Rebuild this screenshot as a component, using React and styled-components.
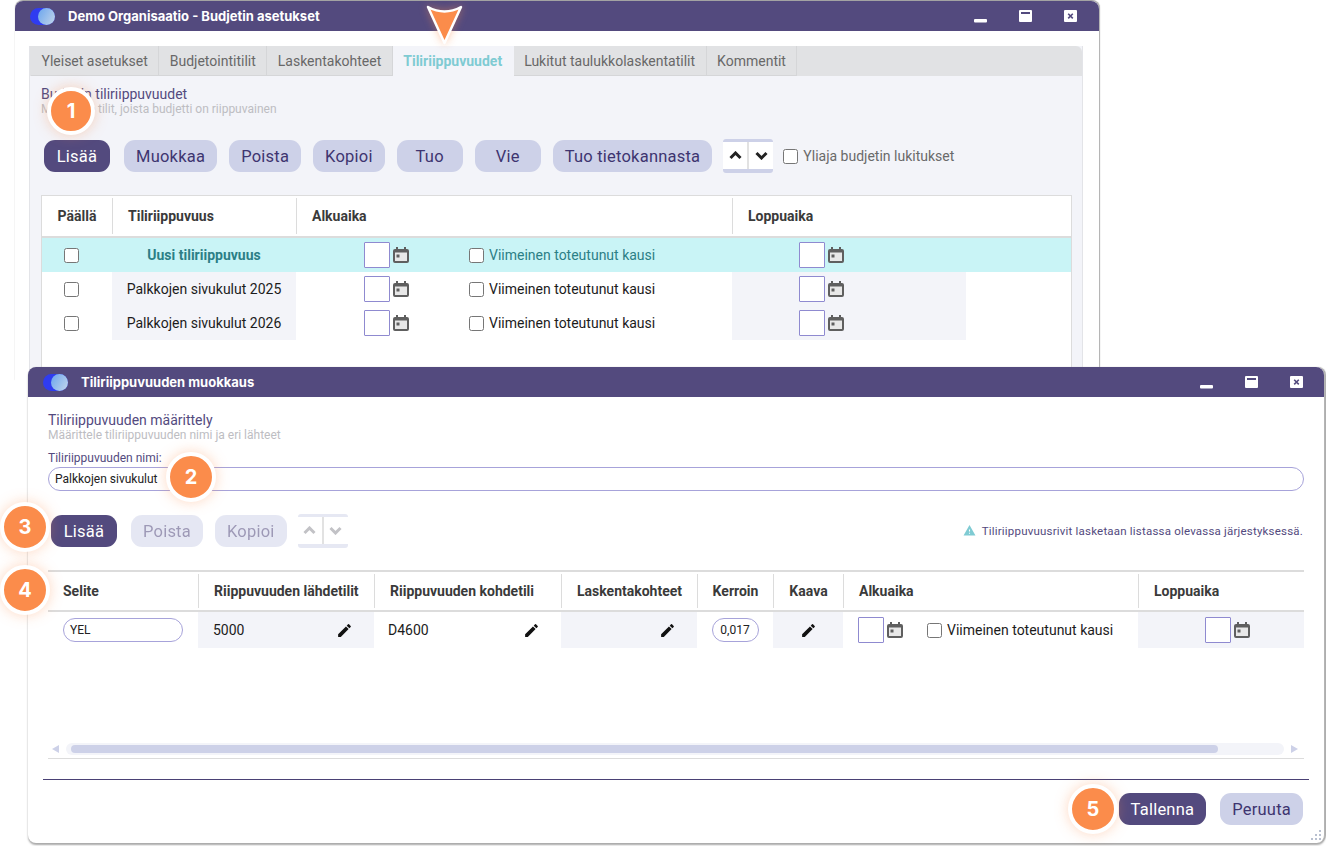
import React from 'react';
import styled, { createGlobalStyle } from 'styled-components';
import { MdEdit, MdWarning } from 'react-icons/md';

const purple = '#534a7e';
const soft = '#cdd1e8';
const panel = '#f3f4f9';
const line = '#dcdcdc';

const Global = createGlobalStyle`
  html, body { margin: 0; padding: 0; background: #fff; }
  body { font-family: Roboto, "Liberation Sans", sans-serif; overflow: hidden; }
  * { box-sizing: border-box; }
`;

const Desktop = styled.div`
  position: relative;
  width: 1326px;
  height: 846px;
  overflow: hidden;
  background: #fff;
`;

const Window = styled.div`
  position: absolute;
  left: ${p => p.$left}px;
  top: ${p => p.$top}px;
  width: ${p => p.$width}px;
  height: ${p => p.$height}px;
  background: #fff;
  border-radius: 8px 8px 0 0;
  border-right: 1px solid #b5b5b5;
  box-shadow: 0 -1px 1px #9a9a9a;
  display: flex;
  flex-direction: column;
  &.front {
    border-radius: 8px;
    box-shadow: 0 2px 2px #a9a9a9, 1px 0 1px #a9a9a9;
  }
`;

const TitleBar = styled.div`
  flex: none;
  height: 30px;
  background: ${purple};
  border-radius: 8px 8px 0 0;
  display: flex;
  align-items: center;
  padding-left: 15px;
  color: #fff;
  font: 700 13px Inter, sans-serif;
`;

const Logo = styled.span`
  position: relative;
  width: 25px;
  height: 17px;
  border-radius: 9px;
  background: #2f3cf0;
  margin-right: 13px;
  &::after {
    content: '';
    position: absolute;
    right: 0;
    top: 0;
    width: 17px;
    height: 17px;
    border-radius: 50%;
    background: linear-gradient(120deg, #6aa5ee, #c4d6ea);
  }
`;

const TitleText = styled.span`
  flex: 1;
`;

const WinButtons = styled.div`
  display: flex;
  align-items: center;
  gap: 32px;
  padding-right: ${p => p.$right}px;
  svg { display: block; }
`;

const Content = styled.div`
  flex: 1;
  min-height: 0;
  display: flex;
  flex-direction: column;
`;

const TabBox = styled.div`
  margin: 15px 16px 0 14px;
  flex: 1;
  background: ${panel};
  border-left: 1px solid #e3e4e8;
  border-right: 1px solid #e3e4e8;
  padding: 0 10px 0 11px;
`;

const Tabs = styled.div`
  display: flex;
  height: 30px;
  margin: 0 -10px 0 -11px;
  padding-left: 1px;
  background: #e1e2e4;
  border-radius: 0 6px 0 0;
`;

const Tab = styled.div`
  padding: 0 10.5px;
  display: flex;
  align-items: center;
  font-size: 14px;
  color: ${p => (p.$active ? '#7fcbd3' : '#686868')};
  font-weight: ${p => (p.$active ? 700 : 400)};
  background: ${p => (p.$active ? panel : 'transparent')};
  border-right: 1px solid ${p => (p.$active ? panel : '#d5d6d8')};
  border-bottom: 1px solid ${p => (p.$active ? panel : '#d5d6d8')};
  white-space: nowrap;
`;

const Heading = styled.div`
  margin-top: ${p => p.$top || 0}px;
  font-size: 14px;
  line-height: 16px;
  color: ${purple};
`;

const SubHeading = styled.div`
  font-size: 12px;
  line-height: 14px;
  color: #bdbdc2;
`;

const Toolbar = styled.div`
  display: flex;
  align-items: center;
  gap: 12px;
  margin: ${p => p.$margin};
`;

const Button = styled.div`
  height: 32px;
  min-width: 66px;
  padding: 0 12px;
  border-radius: 11px;
  display: flex;
  align-items: center;
  justify-content: center;
  font-size: 16.5px;
  letter-spacing: 0.22px;
  white-space: nowrap;
  background: ${p => (p.$primary ? purple : soft)};
  color: ${p => (p.$primary ? '#fff' : '#3e3570')};
  opacity: ${p => (p.$faded ? 0.5 : 1)};
  margin-right: ${p => (p.$primary ? 2 : 0)}px;
`;

const ArrowGroup = styled.div`
  width: 50px;
  height: 34px;
  margin-left: -1px;
  display: flex;
  background: #fff;
  border-top: 3px solid ${p => (p.$faded ? '#e6e8f3' : soft)};
  border-bottom: 4px solid ${p => (p.$faded ? '#e6e8f3' : soft)};
  border-radius: 3px;
`;

const ArrowCell = styled.div`
  flex: 1;
  display: flex;
  align-items: center;
  justify-content: center;
  svg { display: block; }
  & + & { border-left: 2px solid #e2e2e2; }
`;

const Check = styled.span`
  flex: none;
  width: 15px;
  height: 15px;
  border: 1px solid #767676;
  border-radius: 2.5px;
  background: #fff;
  display: inline-block;
`;

const CheckLabel = styled.label`
  display: inline-flex;
  align-items: center;
  gap: 5px;
  margin-left: ${p => p.$left || 0}px;
  font-size: 14px;
  color: ${p => p.$color || '#1c1c1c'};
  white-space: nowrap;
`;

const Table = styled.div`
  background: #fff;
  &.boxed {
    margin-top: 22px;
    border: 1px solid ${line};
    border-bottom: none;
    height: 190px;
  }
  &.flat {
    margin-top: 22px;
    border-top: 2px solid ${line};
  }
`;

const Row = styled.div`
  display: grid;
  grid-template-columns: ${p => p.$cols};
  height: ${p => p.$height}px;
  background: ${p => (p.$selected ? '#c9f4f6' : 'transparent')};
  color: ${p => (p.$selected ? '#2c7f86' : '#1c1c1c')};
`;

const Head = styled.div`
  display: grid;
  grid-template-columns: ${p => p.$cols};
  height: ${p => p.$height}px;
  border-bottom: 2px solid ${line};
  align-items: stretch;
`;

const HeadCell = styled.div`
  display: flex;
  align-items: center;
  justify-content: ${p => (p.$center ? 'center' : 'flex-start')};
  padding-left: ${p => (p.$center ? 0 : 15)}px;
  margin: 2px 0;
  font-size: 14px;
  font-weight: 700;
  color: #3a3a3a;
  white-space: nowrap;
  & + & { border-left: 1px solid ${line}; }
`;

const Cell = styled.div`
  display: flex;
  align-items: center;
  justify-content: ${p => p.$justify || 'flex-start'};
  padding: ${p => p.$pad || '0'};
  gap: ${p => p.$gap || 0}px;
  font-size: 14px;
  font-weight: ${p => (p.$bold ? 700 : 400)};
  background: ${p => (p.$shade ? panel : 'transparent')};
  white-space: nowrap;
  min-width: 0;
`;

const DateBox = styled.span`
  flex: none;
  width: 26px;
  height: 26px;
  background: #fff;
  border: 1px solid #8f8ad0;
  border-radius: 1px;
  display: inline-block;
`;

const DateField = styled.span`
  display: inline-flex;
  align-items: center;
  gap: 3px;
  svg { display: block; }
`;

const Form = styled.div`
  flex: 1;
  display: flex;
  flex-direction: column;
  padding: 15px 20px 0;
  position: relative;
`;

const FieldLabel = styled.div`
  margin-top: 9px;
  margin-bottom: 2px;
  font-size: 12px;
  line-height: 14px;
  color: ${purple};
`;

const PillInput = styled.div`
  height: ${p => p.$height || 24}px;
  width: ${p => p.$width || 'auto'};
  border: 1px solid #a7a3da;
  border-radius: 13px;
  background: #fff;
  display: flex;
  align-items: center;
  justify-content: ${p => (p.$center ? 'center' : 'flex-start')};
  padding: ${p => (p.$center ? 0 : '0 6px')};
  font-size: 12px;
  color: #222;
`;

const Spacer = styled.div`
  flex: 1;
`;

const Note = styled.div`
  display: flex;
  align-items: center;
  gap: 6px;
  font-size: 11.5px;
  color: ${purple};
  letter-spacing: 0.2px;
  margin-right: 1px;
  margin-top: -1px;
`;

const Scroll = styled.div`
  height: 16px;
  margin-top: 95px;
  border-bottom: 1px solid ${line};
  display: flex;
  align-items: flex-start;
  padding: 0 6px 0 4px;
  gap: 4px;
`;

const ScrollArrow = styled.div`
  width: 0;
  height: 0;
  margin-top: 2px;
  border-top: 4px solid transparent;
  border-bottom: 4px solid transparent;
  ${p => (p.$right ? `border-left: 7px solid ${soft};` : `border-right: 7px solid ${soft};`)}
`;

const ScrollTrack = styled.div`
  flex: 1;
  height: 12px;
  margin: 0 3px;
  padding: 2px 66px 2px 5px;
  background: ${panel};
  border-radius: 6px;
`;

const ScrollThumb = styled.div`
  height: 8px;
  background: ${soft};
  border-radius: 4px;
`;

const Divider = styled.div`
  height: 1px;
  margin: 20px -5px 0;
  background: #4a4175;
`;

const Footer = styled.div`
  display: flex;
  justify-content: flex-end;
  gap: 12px;
  margin-top: 13px;
  padding-right: 1px;
`;

const Grip = styled.svg`
  position: absolute;
  right: 2px;
  bottom: 2px;
`;

const Badge = styled.div`
  position: absolute;
  left: ${p => p.$x - p.$size / 2}px;
  top: ${p => p.$y - p.$size / 2}px;
  width: ${p => p.$size}px;
  height: ${p => p.$size}px;
  border-radius: 50%;
  background: #fb8c4b;
  border: 4px solid #fff;
  box-shadow: 0 0 14px rgba(251, 140, 75, 0.35);
  color: #fff;
  font: 700 20px Inter, sans-serif;
  display: flex;
  align-items: center;
  justify-content: center;
`;

const Pointer = styled.svg`
  position: absolute;
  left: 424px;
  top: 3px;
  overflow: visible;
  filter: drop-shadow(0 0 4px rgba(251, 140, 75, 0.45));
`;

const Calendar = () => (
  <svg width="16" height="17" viewBox="0 0 16 17">
    <path fill="#5f5f5f" d="M3 0h2v2h6V0h2v2h1a2 2 0 0 1 2 2v10a2 2 0 0 1-2 2H2a2 2 0 0 1-2-2V4a2 2 0 0 1 2-2h1z" />
    <rect x="2" y="5.5" width="12" height="8.5" fill="#e8e8e8" />
    <rect x="3.5" y="7.5" width="3" height="3" fill="#5f5f5f" />
  </svg>
);

const Date2 = () => (
  <DateField>
    <DateBox />
    <Calendar />
  </DateField>
);

const Chevron = ({ down, color }) => (
  <svg width="13" height="9" viewBox="0 0 13 9">
    <path d={down ? 'M1.5 2l5 5 5-5' : 'M1.5 7l5-5 5 5'} fill="none" stroke={color} strokeWidth="3" />
  </svg>
);

const Arrows = ({ faded }) => (
  <ArrowGroup $faded={faded}>
    <ArrowCell><Chevron color={faded ? '#c2c2c6' : '#222'} /></ArrowCell>
    <ArrowCell><Chevron down color={faded ? '#c2c2c6' : '#222'} /></ArrowCell>
  </ArrowGroup>
);

const WinIcons = ({ right }) => (
  <WinButtons $right={right}>
    <svg width="13" height="13" viewBox="0 0 13 13"><rect y="9" width="13" height="3.5" rx="1" fill="#fff" /></svg>
    <svg width="13" height="13" viewBox="0 0 13 13"><rect width="13" height="12" rx="1" fill="#fff" /><rect x="2" y="2" width="9" height="2" fill={purple} /></svg>
    <svg width="13" height="13" viewBox="0 0 13 13"><rect width="13" height="12" rx="1" fill="#fff" /><path d="M4.2 3.8l4.6 4.6M8.8 3.8L4.2 8.4" stroke={purple} strokeWidth="1.6" /></svg>
  </WinButtons>
);

const topCols = '70px 184px 436px 1fr';
const topRowCols = '70px 184px 436px 234px 1fr';
const topRows = ['Palkkojen sivukulut 2025', 'Palkkojen sivukulut 2026'];
const wideCols = '150px 176px 187px 136px 76px 70px 295px 1fr';

function DependencyRow({ name, selected }) {
  const color = selected ? '#2c7f86' : undefined;
  return (
    <Row $cols={topRowCols} $height={34} $selected={selected}>
      <Cell $pad="0 0 0 22px"><Check /></Cell>
      <Cell $justify="center" $shade={!selected} $bold={selected}>{name}</Cell>
      <Cell $gap={60} $pad="0 0 0 68px">
        <Date2 />
        <CheckLabel $color={color}><Check />Viimeinen toteutunut kausi</CheckLabel>
      </Cell>
      <Cell $shade={!selected} $pad="0 0 0 67px"><Date2 /></Cell>
      <Cell />
    </Row>
  );
}

export default function App() {
  return (
    <Desktop>
      <Global />

      <Window $left={15} $top={1} $width={1085} $height={380}>
        <TitleBar>
          <Logo />
          <TitleText>Demo Organisaatio - Budjetin asetukset</TitleText>
          <WinIcons right={22} />
        </TitleBar>
        <Content>
          <TabBox>
            <Tabs>
              <Tab>Yleiset asetukset</Tab>
              <Tab>Budjetointitilit</Tab>
              <Tab>Laskentakohteet</Tab>
              <Tab $active>Tiliriippuvuudet</Tab>
              <Tab>Lukitut taulukkolaskentatilit</Tab>
              <Tab>Kommentit</Tab>
            </Tabs>
            <Heading $top={10}>Budjetin tiliriippuvuudet</Heading>
            <SubHeading>Määrittele tilit, joista budjetti on riippuvainen</SubHeading>
            <Toolbar $margin="23px 0 0 3px">
              <Button $primary>Lisää</Button>
              <Button>Muokkaa</Button>
              <Button>Poista</Button>
              <Button>Kopioi</Button>
              <Button>Tuo</Button>
              <Button>Vie</Button>
              <Button>Tuo tietokannasta</Button>
              <Arrows />
              <CheckLabel $color="#6a6a6a" $left={-2}><Check />Yliaja budjetin lukitukset</CheckLabel>
            </Toolbar>
            <Table className="boxed">
              <Head $cols={topCols} $height={42}>
                <HeadCell $center>Päällä</HeadCell>
                <HeadCell>Tiliriippuvuus</HeadCell>
                <HeadCell>Alkuaika</HeadCell>
                <HeadCell>Loppuaika</HeadCell>
              </Head>
              <DependencyRow name="Uusi tiliriippuvuus" selected />
              {topRows.map(name => <DependencyRow key={name} name={name} />)}
            </Table>
          </TabBox>
        </Content>
      </Window>

      <Window className="front" $left={28} $top={367} $width={1297} $height={476}>
        <TitleBar>
          <Logo />
          <TitleText>Tiliriippuvuuden muokkaus</TitleText>
          <WinIcons right={21} />
        </TitleBar>
        <Form>
          <Heading>Tiliriippuvuuden määrittely</Heading>
          <SubHeading>Määrittele tiliriippuvuuden nimi ja eri lähteet</SubHeading>
          <FieldLabel>Tiliriippuvuuden nimi:</FieldLabel>
          <PillInput>Palkkojen sivukulut</PillInput>
          <Toolbar $margin="23px 0 0 3px">
            <Button $primary>Lisää</Button>
            <Button $faded>Poista</Button>
            <Button $faded>Kopioi</Button>
            <Arrows faded />
            <Spacer />
            <Note><MdWarning color="#7fcbd3" size={13} />Tiliriippuvuusrivit lasketaan listassa olevassa järjestyksessä.</Note>
          </Toolbar>
          <Table className="flat">
            <Head $cols={wideCols} $height={40}>
              <HeadCell>Selite</HeadCell>
              <HeadCell>Riippuvuuden lähdetilit</HeadCell>
              <HeadCell>Riippuvuuden kohdetili</HeadCell>
              <HeadCell $center>Laskentakohteet</HeadCell>
              <HeadCell $center>Kerroin</HeadCell>
              <HeadCell $center>Kaava</HeadCell>
              <HeadCell>Alkuaika</HeadCell>
              <HeadCell>Loppuaika</HeadCell>
            </Head>
            <Row $cols={wideCols} $height={36}>
              <Cell $pad="0 15px"><PillInput $width="120px">YEL</PillInput></Cell>
              <Cell $shade $pad="0 21px 0 15px" $justify="space-between">5000<MdEdit size={17} color="#111" /></Cell>
              <Cell $pad="0 21px 0 14px" $justify="space-between">D4600<MdEdit size={17} color="#111" /></Cell>
              <Cell $shade $pad="0 21px 0 0" $justify="flex-end"><MdEdit size={17} color="#111" /></Cell>
              <Cell $justify="center"><PillInput $center $width="47px">0,017</PillInput></Cell>
              <Cell $shade $justify="center"><MdEdit size={17} color="#111" /></Cell>
              <Cell $gap={24} $pad="0 0 0 15px">
                <Date2 />
                <CheckLabel><Check />Viimeinen toteutunut kausi</CheckLabel>
              </Cell>
              <Cell $shade $pad="0 0 0 67px"><Date2 /></Cell>
            </Row>
          </Table>
          <Scroll>
            <ScrollArrow />
            <ScrollTrack><ScrollThumb /></ScrollTrack>
            <ScrollArrow $right />
          </Scroll>
          <Divider />
          <Footer>
            <Button $primary>Tallenna</Button>
            <Button>Peruuta</Button>
          </Footer>
          <Grip width="12" height="12" viewBox="0 0 12 12" fill="#b9c0d0">
            <rect x="9" y="1" width="2" height="2" />
            <rect x="5" y="5" width="2" height="2" />
            <rect x="9" y="5" width="2" height="2" />
            <rect x="1" y="9" width="2" height="2" />
            <rect x="5" y="9" width="2" height="2" />
            <rect x="9" y="9" width="2" height="2" />
          </Grip>
        </Form>
      </Window>

      <Pointer width="41" height="44" viewBox="0 0 41 44">
        <path d="M4 4 Q20.5 13 37 4 L20.5 40 Z" fill="#fb8c4b" stroke="#fff" strokeWidth="2.5" strokeLinejoin="round" />
      </Pointer>

      <Badge $x={71} $y={111} $size={48}>1</Badge>
      <Badge $x={191} $y={477} $size={50}>2</Badge>
      <Badge $x={25} $y={527} $size={50}>3</Badge>
      <Badge $x={25} $y={590} $size={50}>4</Badge>
      <Badge $x={1093} $y={809} $size={50}>5</Badge>
    </Desktop>
  );
}
